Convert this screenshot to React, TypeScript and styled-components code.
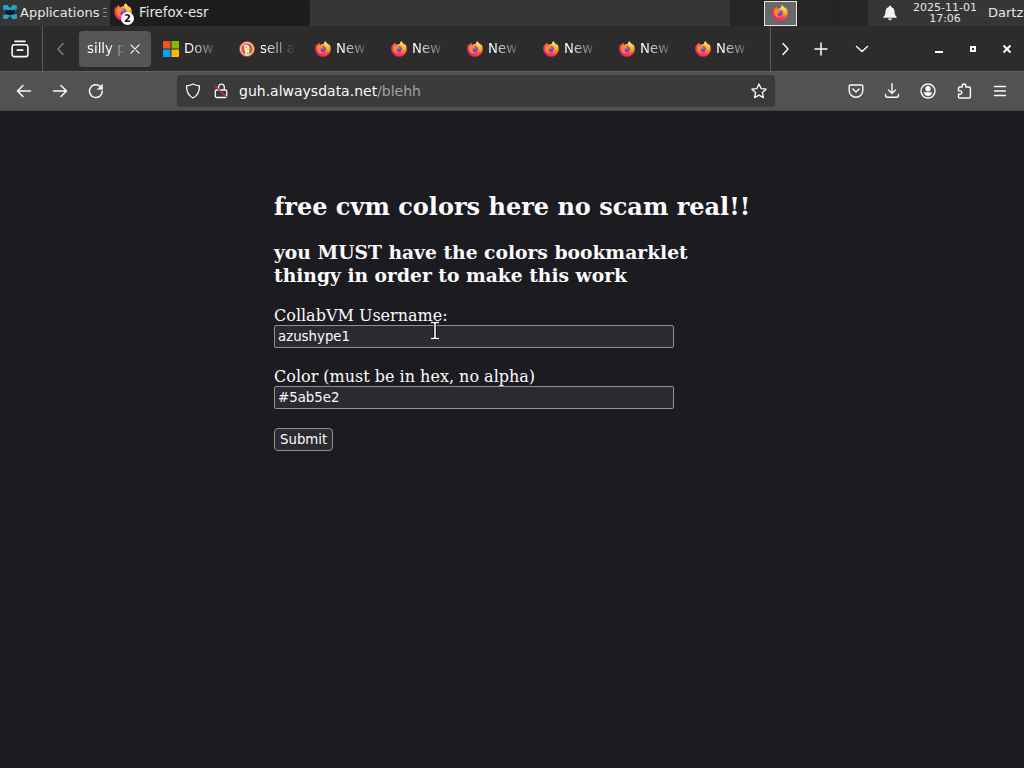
import React from "react";
import styled, { createGlobalStyle } from "styled-components";

const GlobalStyle = createGlobalStyle`
  *, *::before, *::after { box-sizing: border-box; }
  html, body, #root { min-height: 100vh; }
  body { margin: 0; background: #1c1b20; color: #fbfbfe; }
  button { font-family: inherit; color: inherit; background: none; border: 0; padding: 0; }
  svg { display: block; flex: none; }
`;

const Desktop = styled.div`
  min-height: 100vh;
  display: flex;
  flex-direction: column;
  font: 13px "DejaVu Sans", sans-serif;
`;

/* ---------- desktop panel ---------- */

const Panel = styled.header`
  display: flex;
  height: 26px;
  background: #363636;
  color: #e6e6e6;
`;

const AppMenu = styled.button`
  display: flex;
  align-items: center;
  gap: 2px;
  width: 110px;
  padding: 0 2px 2px;
  font-size: 13px;
`;

const Handle = styled.span`
  display: grid;
  gap: 3px;
  width: 4px;
  margin-left: 2px;
  i { height: 1px; background: #8a8a8a; }
`;

const WindowButton = styled.button`
  display: flex;
  align-items: center;
  gap: 5px;
  width: 200px;
  padding: 0 4px 2px;
  background: #1d1d1d;
  border-radius: 3px;
`;

const TaskIcon = styled.span`
  position: relative;
  padding-right: 2px;
`;

const Count = styled.span`
  position: absolute;
  right: 0;
  bottom: -4px;
  width: 13px;
  height: 13px;
  border-radius: 50%;
  background: #fff;
  color: #111;
  font-size: 10px;
  font-weight: bold;
  line-height: 13px;
  text-align: center;
`;

const Spacer = styled.div`
  flex: 1;
`;

const Pager = styled.div`
  display: flex;
  width: 138px;
  background: #252525;
`;

const Workspace = styled.button<{ $wide?: boolean }>`
  width: ${(p) => (p.$wide ? 36 : 34)}px;
  border-right: 1px solid #212121;
`;

const Thumb = styled.span`
  display: flex;
  align-items: center;
  justify-content: center;
  width: 33px;
  height: 25px;
  margin-top: 1px;
  padding: 0 2px 2px 0;
  background: #686868;
  border: 1px solid #e8e8e8;
`;

const Bell = styled.button`
  width: 44px;
  display: grid;
  place-items: center;
`;

const Clock = styled.time`
  width: 66px;
  padding-top: 2px;
  font-size: 11px;
  line-height: 11px;
  text-align: center;
`;

const User = styled.button`
  width: 46px;
  padding: 0 0 2px 10px;
  font-size: 13px;
  text-align: left;
`;

/* ---------- browser chrome ---------- */

const TabStrip = styled.nav`
  display: flex;
  align-items: stretch;
  height: 45px;
  background: #2c2c2c;
`;

const StripButton = styled.button<{ $w: number; $dim?: boolean; $line?: "left" | "right" }>`
  display: grid;
  place-items: center;
  width: ${(p) => p.$w}px;
  color: ${(p) => (p.$dim ? "#828282" : "#fbfbfe")};
  border: 0 solid #5a5a5a;
  ${(p) => p.$line && `border-${p.$line}-width: 1px; padding-right: 2px;`}
`;

const Tabs = styled.div`
  display: flex;
  align-items: center;
  padding-left: 1px;
`;

const Tab = styled.button<{ $active?: boolean }>`
  display: flex;
  align-items: center;
  gap: 5px;
  width: 72px;
  height: 36px;
  margin-right: 4px;
  padding: 0 ${(p) => (p.$active ? 11 : 8)}px 0 8px;
  border-radius: 4px;
  background: ${(p) => (p.$active ? "#555557" : "transparent")};
`;

const TabLabel = styled.span<{ $fade: number }>`
  flex: 1;
  min-width: 0;
  overflow: hidden;
  white-space: nowrap;
  text-align: left;
  line-height: 20px;
  mask-image: linear-gradient(to left, transparent, #000 ${(p) => p.$fade}px);
`;

const Toolbar = styled.div`
  display: flex;
  align-items: center;
  height: 40px;
  padding: 0 6px;
  background: #525252;
  border-top: 1px solid #606060;
  border-bottom: 1px solid #434346;
`;

const ToolButton = styled.button`
  display: grid;
  place-items: center;
  width: 36px;
  height: 32px;
`;

const UrlBar = styled.div`
  flex: 1;
  min-width: 0;
  display: flex;
  align-items: center;
  gap: 12px;
  height: 32px;
  margin: 0 63px;
  padding: 0 8px;
  border-radius: 4px;
  background: #3a3a3a;
`;

const Address = styled.a`
  flex: 1;
  margin-left: -2px;
  font-size: 14px;
  color: #fbfbfe;
  text-decoration: none;
  span { color: #a0a0a0; }
`;

/* ---------- page ---------- */

const Page = styled.main`
  position: relative;
  flex: 1;
  display: flex;
  justify-content: center;
  align-items: flex-start;
  padding-top: 82px;
  font: 16px "DejaVu Serif", serif;
`;

const Column = styled.form`
  width: 476px;
  h2, h3 { margin: 0; }
  h2 { font-size: 24px; line-height: 28px; margin-bottom: 20px; white-space: nowrap; }
  h3 { line-height: 23px; margin-bottom: 19px; }
`;

const Field = styled.label`
  display: block;
  width: 400px;
  line-height: 19px;
  margin-bottom: 19px;
`;

const TextInput = styled.input`
  display: block;
  width: 100%;
  height: 23px;
  padding: 0 3px;
  font-family: "DejaVu Sans", sans-serif;
  color: #fbfbfe;
  background: #2b2a30;
  border: 1px solid #8f8f9d;
  border-radius: 2px;
`;

const Submit = styled.button`
  height: 23px;
  padding: 0 5px;
  font-family: "DejaVu Sans", sans-serif;
  color: #fbfbfe;
  background: #2b2a30;
  border: 1px solid #8f8f9d;
  border-radius: 4px;
`;

const Pointer = styled.svg`
  position: absolute;
  left: calc(50% - 82px);
  top: 210px;
`;

/* ---------- icons ---------- */

const HiddenSvg = styled.svg`
  position: absolute;
`;

const Stroke = ({ size = 16, w = 1.3, children }: { size?: number; w?: number; children: React.ReactNode }) => (
  <svg width={size} height={size} viewBox="0 0 16 16" fill="none" stroke="currentColor" strokeWidth={w} strokeLinecap="round" strokeLinejoin="round">
    {children}
  </svg>
);

const IconDefs = () => (
  <HiddenSvg width="0" height="0" aria-hidden="true">
    <defs>
      <radialGradient id="fxBody" cx="0.82" cy="0.12" r="1">
        <stop offset="0.1" stopColor="#ffe14a" />
        <stop offset="0.45" stopColor="#ff9526" />
        <stop offset="0.72" stopColor="#ff4047" />
        <stop offset="1" stopColor="#e3208c" />
      </radialGradient>
      <radialGradient id="fxCore" cx="0.5" cy="0.3" r="0.75">
        <stop offset="0" stopColor="#a06bf0" />
        <stop offset="1" stopColor="#5a35a8" />
      </radialGradient>
      <linearGradient id="fxTail" x1="0" y1="0" x2="0" y2="1">
        <stop offset="0" stopColor="#fff36b" />
        <stop offset="1" stopColor="#ff9a30" />
      </linearGradient>
    </defs>
  </HiddenSvg>
);

const Firefox = ({ size = 16 }: { size?: number }) => (
  <svg width={size} height={size} viewBox="0 0 16 16">
    <path fill="url(#fxBody)" d="M10.4.2c-.9.7-1.4 1.7-1.5 2.7-1.6 0-2.6.4-3.4 1C5 3.6 4.4 2.6 4.4 1.7 3.2 2.3 2.5 3.3 2.3 4.1 1.7 3.9 1.5 3.300 1.500 3.300.6 4.700.2 6.300.2 8a7.800 7.800 0 0 0 15.600 0c0-2.200-.9-4.200-2-5.200 0 .5.200 1 .1 1.400C13.100 2.400 11 2 10.400.2z" />
    <circle cx="8" cy="7.800" r="2.900" fill="url(#fxCore)" />
    <path fill="#ff8a2a" d="M2.400 5.100c1.300-.8 2.700-.5 3.600.2.700-.1 1.500.1 2.200.7-.1.700-1.600.9-1.800 1.400-.1 1-1 1.200-1 1.900 0 1.500 1.300 2.500 2.900 2.400C5.300 13.400 2.400 11 2.200 8z" />
    <path fill="url(#fxTail)" d="M10.400.2c-.9.7-1.500 1.700-1.500 2.700 1.900.4 3.100 2 3.100 4 0 1.200-.3 2-.8 2.800 1.700-.7 2.600-2.500 2.400-4.600C13.200 2.900 11 2 10.400.2z" />
  </svg>
);

const Xfce = () => (
  <svg width="16" height="16" viewBox="0 0 16 16">
    <path fill="#2ba3c9" d="M1 1.500 5 .8 8 4 11.200.8l4 .9-.7 4L12.200 8l2.700 2.800.4 3.700-4.200.7L8 12l-3.200 3.200-4-.8.7-3.700L4 8 1.200 5.300z" />
    <path fill="#0b1a22" d="M3 5.200 6 6.500l2-.7 2.300.7 3.200-1.300-1.200 3L14 10l-3.500.6L8 11.500l-2.600-.9L2 10.400l1.700-2.200z" />
  </svg>
);

const Windows = () => (
  <svg width="16" height="16" viewBox="0 0 16 16">
    <path fill="#f25022" d="M0 0h7.500v7.500H0z" />
    <path fill="#7fba00" d="M8.500 0H16v7.500H8.500z" />
    <path fill="#00a4ef" d="M0 8.500h7.500V16H0z" />
    <path fill="#ffb900" d="M8.500 8.500H16V16H8.500z" />
  </svg>
);

const Duck = () => (
  <svg width="16" height="16" viewBox="0 0 16 16">
    <circle cx="8" cy="8" r="7.800" fill="#de5833" />
    <circle cx="8" cy="8" r="6.300" fill="none" stroke="#fff" strokeWidth="1" />
    <path fill="#fff" d="M5.200 4.200c1.500-1 4.500-.4 5 1.800.2 1 0 2.200-.2 3l1 4.300c-1.500.7-3 .7-4.200.3C6.200 10.800 5 7 5.200 4.200z" />
    <path fill="#fdd20a" d="M8 7.800c1.200-.4 2.700-.5 3.500-.1-.4.700-1.800.9-2.600 1.400.6.300 1.400.2 1.900.3-.8.600-2.500.5-3-.3z" />
    <path fill="#65bc46" d="m8 11 1.500.7L11 11v2.200l-1.500-.6-1.500.6z" />
    <circle cx="7.200" cy="6" r=".7" fill="#2d4f8e" />
  </svg>
);

type TabInfo = { label: string; active?: boolean; icon?: React.ReactNode };

const tabs: TabInfo[] = [
  { label: "silly p", active: true },
  { label: "Dow", icon: <Windows /> },
  { label: "sell a", icon: <Duck /> },
  ...Array.from({ length: 6 }, () => ({ label: "New", icon: <Firefox /> })),
];

export default function App() {
  return (
    <Desktop>
      <GlobalStyle />
      <IconDefs />
      <Panel>
        <AppMenu>
          <Xfce />
          Applications
          <Handle><i /><i /><i /></Handle>
        </AppMenu>
        <WindowButton>
          <TaskIcon>
            <Firefox size={18} />
            <Count>2</Count>
          </TaskIcon>
          Firefox-esr
        </WindowButton>
        <Spacer />
        <Pager>
          <Workspace aria-label="Workspace 1" />
          <Workspace aria-label="Workspace 2"><Thumb><Firefox /></Thumb></Workspace>
          <Workspace $wide aria-label="Workspace 3" />
        </Pager>
        <Bell aria-label="Notifications">
          <svg width="16" height="16" viewBox="0 0 16 16" fill="#f2f2f2">
            <path d="M8 .8c.8 0 1.300.5 1.300 1.200 2 .6 3.100 2.200 3.200 4.500.1 2.700.7 4.200 2.200 5.500v.8H1.300V12c1.500-1.300 2.100-2.800 2.200-5.500.1-2.300 1.200-3.900 3.200-4.500C6.700 1.300 7.200.8 8 .8zM6 13.500h4c-.2 1-.9 1.700-2 1.700s-1.800-.7-2-1.700z" />
          </svg>
        </Bell>
        <Clock>2025-11-01 17:06</Clock>
        <User>Dartz</User>
      </Panel>

      <TabStrip>
        <StripButton $w={43} $line="right" aria-label="Recent browsing">
          <Stroke size={18} w={1.4}>
            <path d="M3.500 1.200h9M1 6.500C1 5 1.800 4.200 3 4.200h10c1.200 0 2 .8 2 2.300v6.300c0 1.200-.8 2-2 2H3c-1.200 0-2-.8-2-2zM5.500 9h5" />
          </Stroke>
        </StripButton>
        <StripButton $w={35} $dim aria-label="Scroll tabs left">
          <Stroke><path d="M10 2.500 5 8l5 5.500" /></Stroke>
        </StripButton>
        <Tabs>
          {tabs.map((t, i) => (
            <Tab key={i} $active={t.active}>
              {t.icon}
              <TabLabel $fade={t.active ? 16 : 30}>{t.label}</TabLabel>
              {t.active && <Stroke size={10} w={1.8}><path d="m1.500 1.500 13 13m0-13-13 13" /></Stroke>}
            </Tab>
          ))}
        </Tabs>
        <Spacer />
        <StripButton $w={33} $line="left" aria-label="Scroll tabs right">
          <Stroke w={1.5}><path d="m5 2.500 5 5.500-5 5.500" /></Stroke>
        </StripButton>
        <StripButton $w={36} aria-label="New tab">
          <Stroke w={1.5}><path d="M8 2v12M2 8h12" /></Stroke>
        </StripButton>
        <StripButton $w={45} aria-label="List all tabs">
          <Stroke w={1.5}><path d="M2.500 5.500 8 10.500l5.500-5" /></Stroke>
        </StripButton>
        <StripButton $w={38} disabled aria-hidden="true" />
        <StripButton $w={34} aria-label="Minimize">
          <svg width="16" height="16" viewBox="0 0 16 16"><path fill="#fff" d="M4 10h8v2H4z" /></svg>
        </StripButton>
        <StripButton $w={34} aria-label="Restore">
          <svg width="16" height="16" viewBox="0 0 16 16"><path fill="none" stroke="#fff" strokeWidth="2" d="M6 6h4v4H6z" /></svg>
        </StripButton>
        <StripButton $w={34} aria-label="Close">
          <svg width="16" height="16" viewBox="0 0 16 16"><path stroke="#fff" strokeWidth="2" d="m4.500 4.500 7 7m0-7-7 7" /></svg>
        </StripButton>
      </TabStrip>

      <Toolbar>
        <ToolButton aria-label="Back">
          <Stroke w={1.5}><path d="M14.500 8h-13M7 2.500 1.500 8 7 13.500" /></Stroke>
        </ToolButton>
        <ToolButton aria-label="Forward">
          <Stroke w={1.5}><path d="M1.500 8h13M9 2.500 14.500 8 9 13.500" /></Stroke>
        </ToolButton>
        <ToolButton aria-label="Reload">
          <Stroke w={1.5}>
            <path d="M14.300 8A6.400 6.400 0 1 1 12 3.200" />
            <path fill="currentColor" d="M14.500 1.500v4.800H9.700z" strokeWidth=".6" />
          </Stroke>
        </ToolButton>
        <UrlBar>
          <Stroke><path d="M8 1c2 1 4.200 1.600 6.500 1.900 0 5.200-1.500 9.400-6.500 12.100C3 12.300 1.500 8.100 1.500 2.900 3.800 2.600 6 2 8 1z" /></Stroke>
          <Stroke>
            <path d="M5.500 7V4a2.900 2.900 0 0 1 5.800 0v3M3.500 7h9c.7 0 1.200.5 1.200 1.200v5c0 .7-.5 1.300-1.200 1.300h-9c-.7 0-1.200-.6-1.200-1.300v-5C2.300 7.500 2.800 7 3.500 7z" />
            <path stroke="#c8305a" strokeWidth="1.500" d="m2 3 11.500 11" />
          </Stroke>
          <Address href="#">guh.alwaysdata.net<span>/blehh</span></Address>
          <Stroke><path d="m8 1 2.100 4.600 5 .6-3.700 3.400 1 5L8 12.100l-4.400 2.500 1-5L.9 6.200l5-.6z" /></Stroke>
        </UrlBar>
        <ToolButton aria-label="Save to Pocket">
          <Stroke w={1.4}><path d="M2.500 2h11c.8 0 1.300.5 1.300 1.300v4.200a6.800 6.800 0 0 1-13.600 0V3.300C1.200 2.500 1.700 2 2.500 2zM4.800 6 8 9l3.200-3" /></Stroke>
        </ToolButton>
        <ToolButton aria-label="Downloads">
          <Stroke w={1.4}><path d="M8 .8v9.700M4.500 7 8 10.500 11.500 7M1.500 11.500v.8c0 1.200.8 2 2 2h9c1.200 0 2-.8 2-2v-.8" /></Stroke>
        </ToolButton>
        <ToolButton aria-label="Account">
          <Stroke w={1.4}>
            <circle cx="8" cy="8" r="7" />
            <circle cx="8" cy="5.800" r="2" fill="currentColor" />
            <path fill="currentColor" d="M4.300 9.700h7.400c-.3 1.800-1.800 3-3.700 3s-3.400-1.200-3.700-3z" strokeWidth=".8" />
          </Stroke>
        </ToolButton>
        <ToolButton aria-label="Extensions">
          <Stroke w={1.4}><path d="M6.200 4V2.800a1.800 1.800 0 0 1 3.600 0V4h3.400c.7 0 1.200.5 1.200 1.200v8.600c0 .7-.5 1.200-1.200 1.200H3.700c-.7 0-1.200-.5-1.200-1.200v-2.600h1.700a1.600 1.600 0 0 0 0-3.300H2.500V5.200C2.500 4.500 3 4 3.700 4z" /></Stroke>
        </ToolButton>
        <ToolButton aria-label="Menu">
          <Stroke w={1.4}><path d="M2.500 3.500h11M2.500 8h11M2.500 12.500h11" /></Stroke>
        </ToolButton>
      </Toolbar>

      <Page>
        <Column onSubmit={(e: React.FormEvent) => e.preventDefault()}>
          <h2>free cvm colors here no scam real!!</h2>
          <h3>you MUST have the colors bookmarklet thingy in order to make this work</h3>
          <Field>
            CollabVM Username:
            <TextInput type="text" defaultValue="azushype1" />
          </Field>
          <Field>
            Color (must be in hex, no alpha)
            <TextInput type="text" defaultValue="#5ab5e2" />
          </Field>
          <Submit type="submit">Submit</Submit>
        </Column>
        <Pointer width="10" height="19" viewBox="0 0 10 19" aria-hidden="true">
          <path d="M1 1.500h3l1 1 1-1h3M1 17.500h3l1-1 1 1h3M5 2v15" fill="none" stroke="#000" strokeWidth="3" />
          <path d="M1 1.500h3l1 1 1-1h3M1 17.500h3l1-1 1 1h3M5 2v15" fill="none" stroke="#fff" strokeWidth="1.600" />
        </Pointer>
      </Page>
    </Desktop>
  );
}
